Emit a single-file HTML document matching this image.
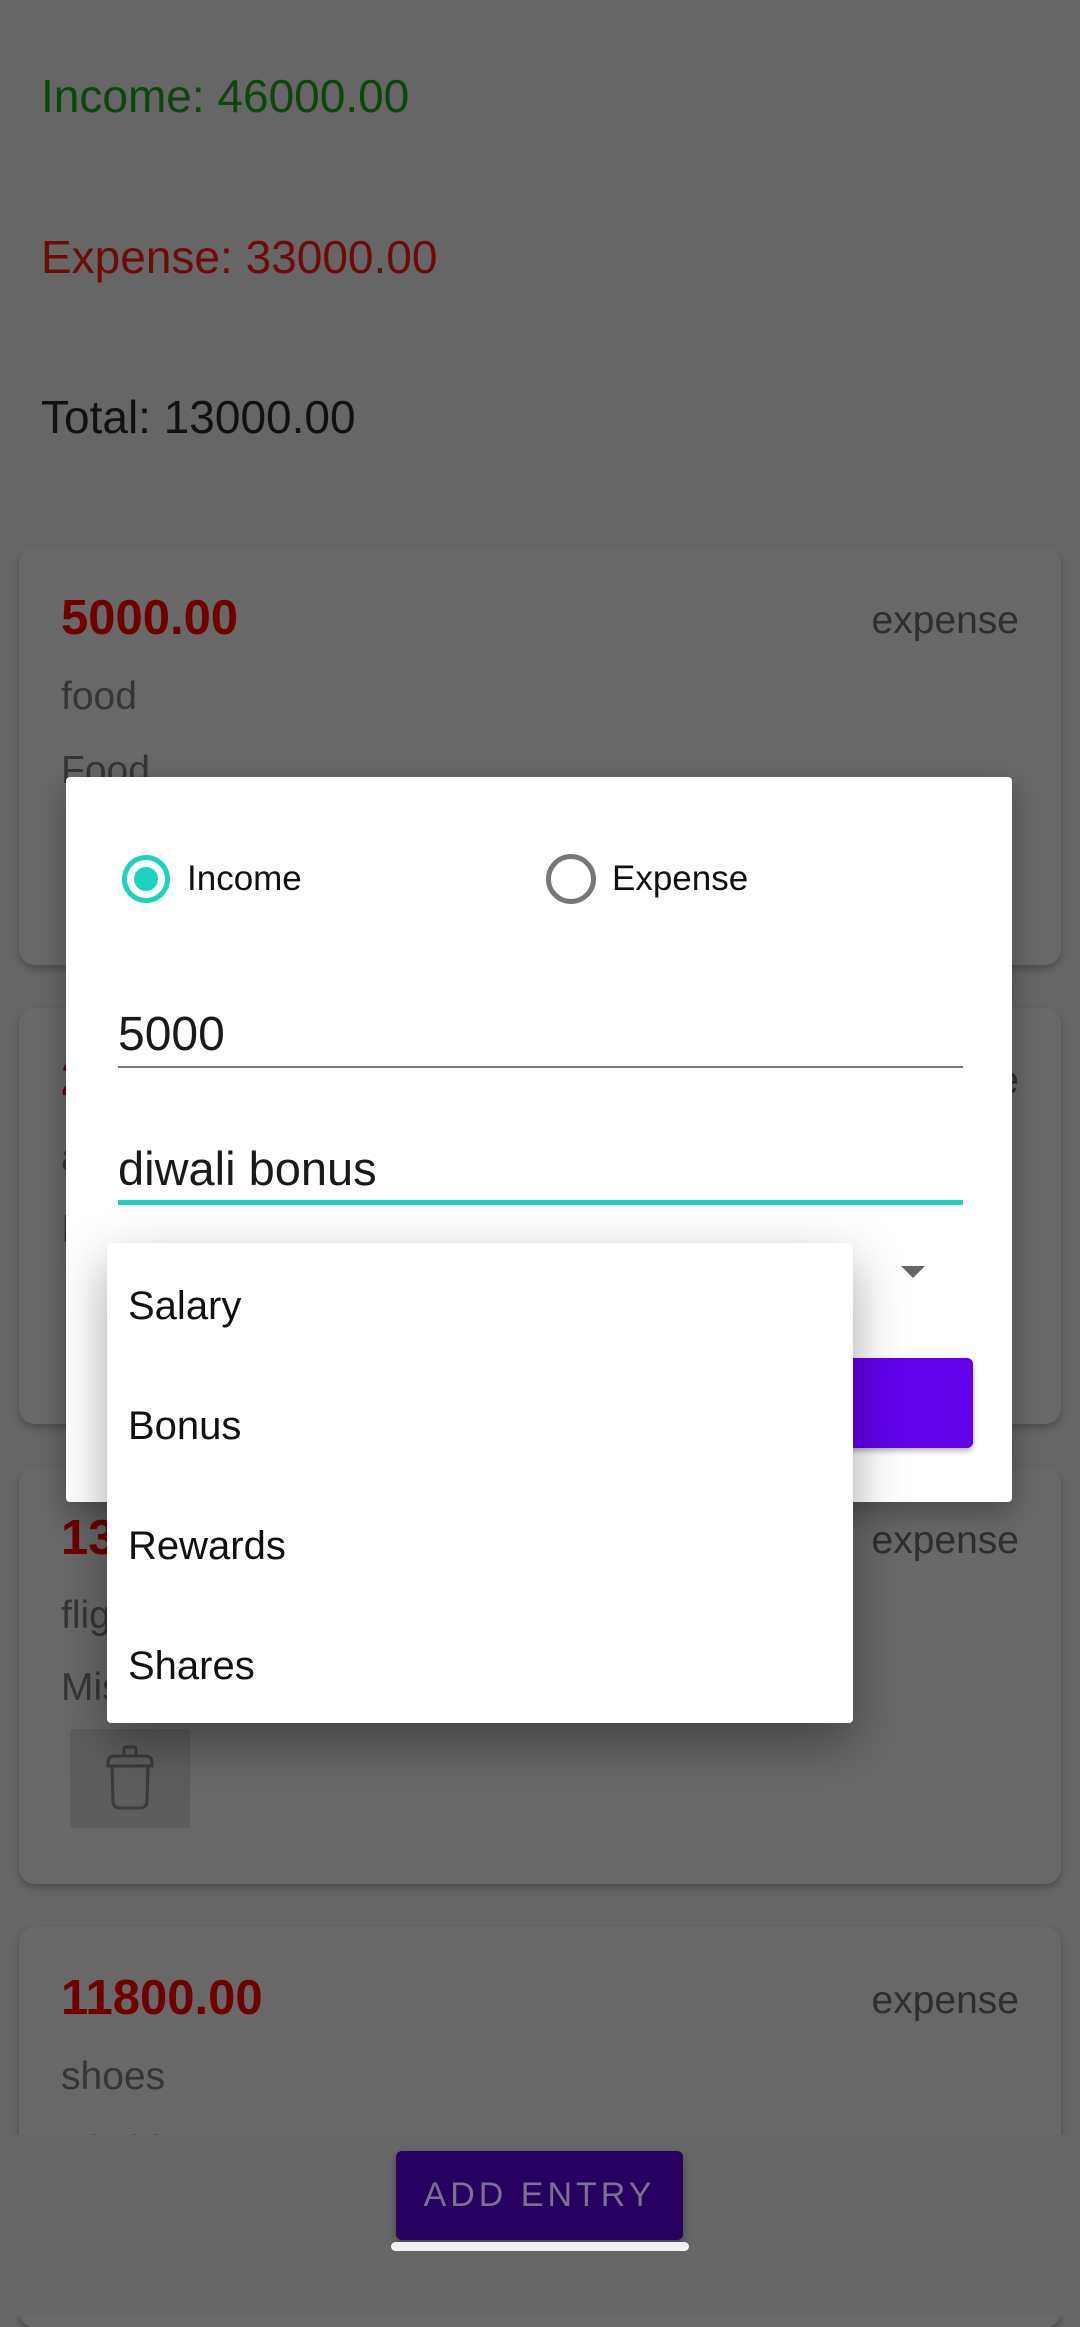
<!DOCTYPE html>
<html><head><meta charset="utf-8"><style>
*{margin:0;padding:0;box-sizing:border-box}
body{width:1080px;height:2316px;background:#666;position:relative;overflow:hidden;font-family:"Liberation Sans",sans-serif}
.a{position:absolute;white-space:nowrap;line-height:1}
.card{position:absolute;left:19px;width:1042px;background:#686868;border-radius:16px;box-shadow:0 4px 8px rgba(0,0,0,.25)}
.amt{color:#700000;font-weight:bold;font-size:49px}
.sub{color:#353535;font-size:39px}
.exp{color:#2e2e2e;font-size:39px}
</style></head><body>
<div class="a" style="left:41px;top:73px;font-size:46px;color:#0c460c">Income: 46000.00</div>
<div class="a" style="left:41px;top:234px;font-size:46px;color:#6e0a0a">Expense: 33000.00</div>
<div class="a" style="left:41px;top:394px;font-size:46px;color:#111">Total: 13000.00</div>

<div class="card" style="top:547px;height:418px"></div>
<div class="a amt" style="left:61px;top:594px">5000.00</div>
<div class="a exp" style="right:61px;top:601px">expense</div>
<div class="a sub" style="left:61px;top:677px">food</div>
<div class="a sub" style="left:61px;top:751px">Food</div>

<div class="card" style="top:1008px;height:416px"></div>
<div class="a amt" style="left:61px;top:1055px">2</div>
<div class="a exp" style="right:61px;top:1061px">expense</div>
<div class="a sub" style="left:61px;top:1138px">a</div>
<div class="a sub" style="left:61px;top:1210px">I</div>

<div class="card" style="top:1467px;height:417px"></div>
<div class="a amt" style="left:61px;top:1514px">13000.00</div>
<div class="a exp" style="right:61px;top:1521px">expense</div>
<div class="a sub" style="left:61px;top:1596px">flight</div>
<div class="a sub" style="left:61px;top:1668px">Misc</div>
<div style="position:absolute;left:70px;top:1729px;width:120px;height:99px;background:#5d5d5d;border-radius:3px">
<svg width="120" height="99" viewBox="0 0 120 99"><g fill="none" stroke="#3a3a3a" stroke-width="3"><rect x="54" y="18" width="12" height="9" rx="2"/><path d="M38 34 Q38 27 45 27 H75 Q82 27 82 34 V37 H38 Z"/><path d="M42 37 L43 73 Q44 79 50 79 H70 Q76 79 77 73 L78 37"/></g></svg></div>

<div class="card" style="top:1927px;height:400px"></div>
<div class="a amt" style="left:61px;top:1974px">11800.00</div>
<div class="a exp" style="right:61px;top:1981px">expense</div>
<div class="a sub" style="left:61px;top:2057px">shoes</div>
<div class="a sub" style="left:61px;top:2131px">Clothing</div>
<div style="position:absolute;left:0;top:2135px;width:1080px;height:181px;background:#666"></div>

<div style="position:absolute;left:396px;top:2151px;width:287px;height:89px;background:#270060;border-radius:6px;box-shadow:0 4px 8px rgba(0,0,0,.3)"></div>
<div class="a" style="left:396px;width:287px;text-align:center;top:2178px;font-size:34px;color:#7d6e96;letter-spacing:4px">ADD ENTRY</div>
<div style="position:absolute;left:391px;top:2242px;width:298px;height:9px;background:#f2f2f2;border-radius:5px"></div>

<div style="position:absolute;left:66px;top:777px;width:946px;height:725px;background:#fff;border-radius:4px;box-shadow:0 10px 30px rgba(0,0,0,.3)"></div>
<div style="position:absolute;left:122px;top:855px;width:48px;height:48px;border:5px solid #1dd3c0;border-radius:50%"></div>
<div style="position:absolute;left:134px;top:867px;width:24px;height:24px;background:#1dd3c0;border-radius:50%"></div>
<div class="a" style="left:187px;top:861px;font-size:35px;color:#111">Income</div>
<div style="position:absolute;left:546px;top:854px;width:50px;height:50px;border:5px solid #777;border-radius:50%"></div>
<div class="a" style="left:612px;top:861px;font-size:35px;color:#111">Expense</div>
<div class="a" style="left:118px;top:1011px;font-size:48px;color:#1a1a1a">5000</div>
<div style="position:absolute;left:118px;top:1066px;width:845px;height:2px;background:#777"></div>
<div class="a" style="left:118px;top:1145px;font-size:47px;color:#1a1a1a">diwali bonus</div>
<div style="position:absolute;left:118px;top:1200px;width:845px;height:5px;background:#1dd3c0"></div>
<div style="position:absolute;left:901px;top:1266px;width:0;height:0;border-left:12px solid transparent;border-right:12px solid transparent;border-top:12px solid #666"></div>
<div style="position:absolute;left:118px;top:1358px;width:855px;height:90px;background:#6200ea;border-radius:6px;box-shadow:0 3px 6px rgba(0,0,0,.3)"></div>

<div style="position:absolute;left:107px;top:1243px;width:746px;height:480px;background:#fff;border-radius:4px;box-shadow:0 20px 50px rgba(0,0,0,.35)"></div>
<div class="a" style="left:128px;top:1286px;font-size:40px;color:#111">Salary</div>
<div class="a" style="left:128px;top:1406px;font-size:40px;color:#111">Bonus</div>
<div class="a" style="left:128px;top:1526px;font-size:40px;color:#111">Rewards</div>
<div class="a" style="left:128px;top:1646px;font-size:40px;color:#111">Shares</div>
</body></html>
